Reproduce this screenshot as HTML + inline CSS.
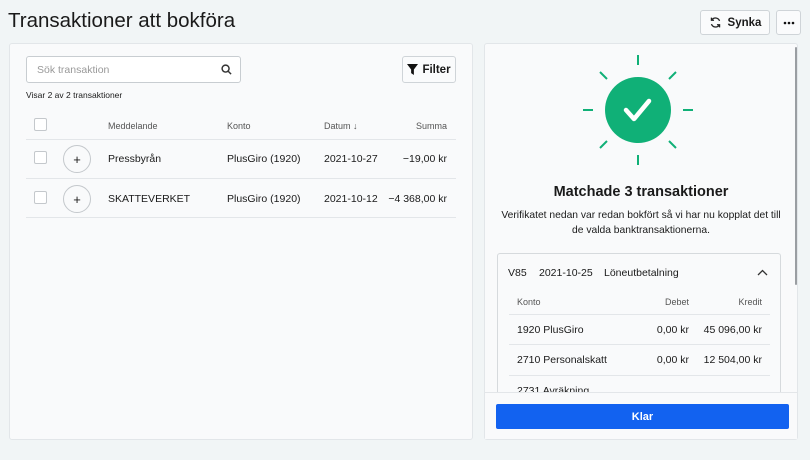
<!DOCTYPE html>
<html><head><meta charset="utf-8"><style>
*{box-sizing:border-box;margin:0;padding:0}
body{width:810px;height:460px;background:#f1f5f6;font-family:"Liberation Sans",sans-serif;color:#1a1a1a;position:relative;overflow:hidden}
.a{position:absolute;white-space:nowrap}
.panel{position:absolute;background:#f9fafb;border:1px solid #e2e6e9;border-radius:3px}
.btn{position:absolute;background:#fafbfc;border:1px solid #cfd4d8;border-radius:3px;font-size:11.5px;font-weight:bold;display:flex;align-items:center;justify-content:center}
.cb{position:absolute;width:13px;height:13px;border:1px solid #c4c8cc;border-radius:2px;background:#fff}
.hl{position:absolute;height:1px;background:#e3e6e9}
.plus{position:absolute;width:28px;height:28px;border:1px solid #c4c8cc;border-radius:50%;font-size:13px;display:flex;align-items:center;justify-content:center}
.t{font-size:10.5px}
.h{font-size:9px;color:#555}
</style></head><body>
<div class="a" style="left:8px;top:9px;font-size:20.5px">Transaktioner att bokföra</div>
<div class="btn" style="left:700px;top:10px;width:70px;height:25px;font-weight:normal"><svg width="13" height="13" viewBox="0 0 16 16" style="margin-right:6px" fill="none" stroke="#222" stroke-width="1.6"><path d="M13 6A5.5 5.5 0 0 0 3.2 5M3 10a5.5 5.5 0 0 0 9.8 1"/><path d="M3 2v3.2h3.2M13 14v-3.2H9.8"/></svg><b>Synka</b></div>
<div class="btn" style="left:776px;top:10px;width:25px;height:25px"><svg width="12" height="4" viewBox="0 0 12 4"><circle cx="2" cy="2" r="1.3" fill="#111"/><circle cx="6" cy="2" r="1.3" fill="#111"/><circle cx="10" cy="2" r="1.3" fill="#111"/></svg></div>

<div class="panel" style="left:9px;top:43px;width:464px;height:397px"></div>
<div class="a" style="left:26px;top:56px;width:215px;height:27px;border:1px solid #c8cdd1;border-radius:3px;background:#fff"></div>
<div class="a t" style="left:37px;top:64px;color:#999">Sök transaktion</div>
<svg class="a" style="left:221px;top:64px" width="11" height="11" viewBox="0 0 12 12" fill="none" stroke="#333" stroke-width="1.6"><circle cx="5" cy="5" r="3.8"/><path d="M8 8l3 3"/></svg>
<div class="btn" style="left:402px;top:56px;width:54px;height:27px"><svg width="11" height="11" viewBox="0 0 12 12" style="margin-right:4px"><path d="M0 0h12L7.5 6v6L4.5 10V6z" fill="#111"/></svg>Filter</div>
<div class="a" style="left:26px;top:90px;font-size:8.5px">Visar 2 av 2 transaktioner</div>
<div class="cb" style="left:34px;top:118px"></div>
<div class="a h" style="left:108px;top:121px">Meddelande</div>
<div class="a h" style="left:227px;top:121px">Konto</div>
<div class="a h" style="left:324px;top:121px">Datum ↓</div>
<div class="a h" style="right:363px;top:121px">Summa</div>
<div class="hl" style="left:26px;top:139px;width:430px"></div>
<div class="cb" style="left:34px;top:151px"></div>
<div class="plus" style="left:63px;top:145px">+</div>
<div class="a t" style="left:108px;top:153px">Pressbyrån</div>
<div class="a t" style="left:227px;top:153px">PlusGiro (1920)</div>
<div class="a t" style="left:324px;top:153px">2021-10-27</div>
<div class="a t" style="right:363px;top:153px">−19,00 kr</div>
<div class="hl" style="left:26px;top:178px;width:430px"></div>
<div class="cb" style="left:34px;top:191px"></div>
<div class="plus" style="left:63px;top:185px">+</div>
<div class="a t" style="left:108px;top:193px">SKATTEVERKET</div>
<div class="a t" style="left:227px;top:193px">PlusGiro (1920)</div>
<div class="a t" style="left:324px;top:193px">2021-10-12</div>
<div class="a t" style="right:363px;top:193px">−4 368,00 kr</div>
<div class="hl" style="left:26px;top:217px;width:430px"></div>

<div class="panel" style="left:484px;top:43px;width:314px;height:397px"></div>
<div class="a" style="left:795px;top:47px;width:2px;height:238px;background:#9a9ea2;border-radius:1px"></div>
<svg class="a" style="left:578px;top:50px" width="120" height="120" viewBox="0 0 120 120">
<circle cx="60" cy="60" r="33" fill="#10b077"/>
<path d="M48 60l8 9 15-18" fill="none" stroke="#fff" stroke-width="4.5" stroke-linecap="round" stroke-linejoin="round"/>
<g stroke="#10b077" stroke-width="2"><path d="M60 5v10M60 105v10M5 60h10M105 60h10M22 22l7 7M98 22l-7 7M22 98l7-7M98 98l-7-7"/></g>
</svg>
<div class="a" style="left:484px;width:314px;text-align:center;top:184px;font-size:14.5px;font-weight:bold">Matchade 3 transaktioner</div>
<div class="a" style="left:484px;width:314px;text-align:center;top:208px;font-size:10.3px;line-height:15px;white-space:normal">Verifikatet nedan var redan bokfört så vi har nu kopplat det till<br>de valda banktransaktionerna.</div>
<div class="a" style="left:497px;top:253px;width:284px;height:140px;border:1px solid #d6dadd;border-bottom:none;border-radius:3px 3px 0 0;overflow:hidden">
<div class="a t" style="left:10px;top:13px">V85</div>
<div class="a t" style="left:41px;top:13px">2021-10-25</div>
<div class="a t" style="left:106px;top:13px">Löneutbetalning</div>
<svg class="a" style="left:259px;top:15px" width="11" height="7" viewBox="0 0 11 7"><path d="M1 6l4.5-4.5L10 6" fill="none" stroke="#333" stroke-width="1.3"/></svg>
<div class="a h" style="left:19px;top:43px">Konto</div>
<div class="a h" style="right:91px;top:43px">Debet</div>
<div class="a h" style="right:18px;top:43px">Kredit</div>
<div class="hl" style="left:11px;top:60px;width:261px"></div>
<div class="a t" style="left:19px;top:70px">1920 PlusGiro</div>
<div class="a t" style="right:91px;top:70px">0,00 kr</div>
<div class="a t" style="right:18px;top:70px">45 096,00 kr</div>
<div class="hl" style="left:11px;top:90px;width:261px"></div>
<div class="a t" style="left:19px;top:100px">2710 Personalskatt</div>
<div class="a t" style="right:91px;top:100px">0,00 kr</div>
<div class="a t" style="right:18px;top:100px">12 504,00 kr</div>
<div class="hl" style="left:11px;top:121px;width:261px"></div>
<div class="a t" style="left:19px;top:131px">2731 Avräkning</div>
</div>
<div class="a" style="left:485px;top:392px;width:312px;height:47px;background:#f9fafb;border-top:1px solid #e3e6e9"></div>
<div class="a" style="left:496px;top:404px;width:293px;height:25px;background:#1262f0;border-radius:2px;color:#fff;font-size:11px;font-weight:bold;display:flex;align-items:center;justify-content:center">Klar</div>
</body></html>
